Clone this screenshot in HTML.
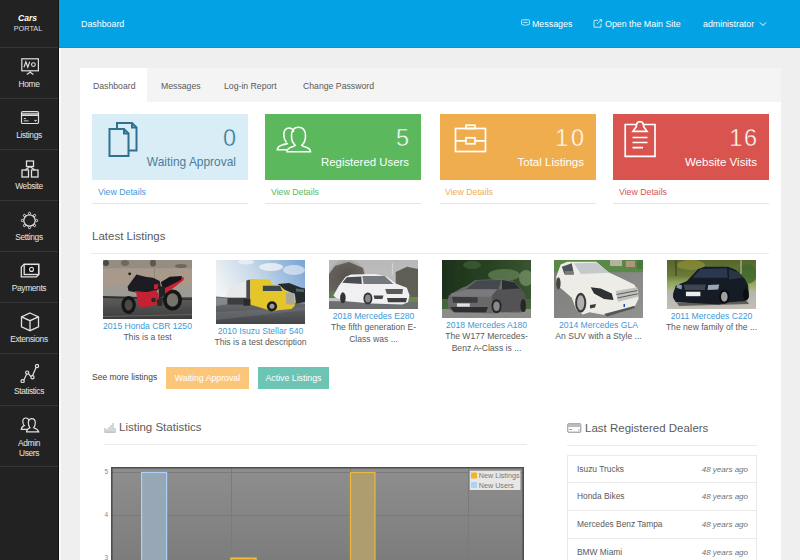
<!DOCTYPE html>
<html><head><meta charset="utf-8">
<style>
*{box-sizing:border-box;margin:0;padding:0}
html,body{width:800px;height:560px;overflow:hidden;background:#efefef;font-family:"Liberation Sans",sans-serif;}
.abs{position:absolute}
#side{position:absolute;left:0;top:0;width:59px;height:560px;background:#222222;border-right:1px solid #141414}
#edge{position:absolute;left:59px;top:48px;width:1.5px;height:512px;background:#fafafa}
#side .sep{position:absolute;left:0;width:58px;height:1px;background:#363636}
#side .lbl{position:absolute;left:0;width:58px;text-align:center;color:#e6e6e6;font-size:8.4px;letter-spacing:-0.35px;line-height:9.5px}
#side svg{position:absolute}
#hdr{position:absolute;left:59px;top:0;width:741px;height:48px;background:#03a2e4;border-bottom:1px solid #0994cf;color:#fff;font-size:8.85px}
#hdr span{position:absolute;top:18.7px;line-height:11px;white-space:nowrap}
#panel{position:absolute;left:80px;top:68px;width:701px;height:500px;background:#fff}
#tabs{position:absolute;left:0;top:0;width:701px;height:33.5px;background:#f4f4f4}
.tab{position:absolute;top:11.5px;font-size:8.7px;color:#5a5a5a;line-height:12px;white-space:nowrap}
.stat{position:absolute;top:46px;width:156px;height:66px}
.stat .num{position:absolute;right:12px;top:10.5px;font-size:23.5px;line-height:26px}
.stat .txt{position:absolute;right:12px;top:41px;font-size:11.8px;line-height:14px;white-space:nowrap}
.vd{position:absolute;top:118.5px;font-size:8.75px;line-height:11px}
.ul{position:absolute;top:135px;width:156px;height:1px;background:#e6e6e6}
h3{position:absolute;font-weight:normal;font-size:11.5px;color:#5c5c5c;line-height:14px;white-space:nowrap}
.hr{position:absolute;height:1px;background:#eaeaea}
.item{position:absolute;top:192px;width:113px;text-align:center}
.item .img{margin:0 auto;width:89px}
.item .t{color:#3a9ad9;font-size:8.6px;line-height:12px;margin-top:1px;white-space:nowrap}
.item .d{color:#5a5a5a;font-size:8.6px;line-height:11.7px}
.btn{position:absolute;top:299px;height:22px;color:#fff;font-size:8.75px;line-height:22px;text-align:center}
.dl{position:absolute;left:487px;width:190px;height:28px;border:1px solid #eaeaea;border-top:none}
.dl .n{position:absolute;left:9px;top:8px;font-size:8.4px;color:#5a5a5a;line-height:11px}
.dl .a{position:absolute;right:8px;top:8px;font-size:8px;color:#707070;font-style:italic;line-height:11px}
</style></head><body>
<div id="side">
  <div class="abs" style="left:0;top:13.5px;width:55px;text-align:center;color:#fff;font-weight:bold;font-style:italic;font-size:8.6px;line-height:9px">Cars</div>
  <div class="abs" style="left:0;top:24.3px;width:56px;text-align:center;color:#ddd;font-size:7.3px;line-height:9px">PORTAL</div>
  <div class="sep" style="top:47px"></div>
  <div class="lbl" style="top:79.5px">Home</div>
  <div class="sep" style="top:98px"></div>
  <div class="lbl" style="top:130.5px">Listings</div>
  <div class="sep" style="top:149px"></div>
  <div class="lbl" style="top:181.5px">Website</div>
  <div class="sep" style="top:200px"></div>
  <div class="lbl" style="top:232.5px">Settings</div>
  <div class="sep" style="top:251px"></div>
  <div class="lbl" style="top:283.5px">Payments</div>
  <div class="sep" style="top:302px"></div>
  <div class="lbl" style="top:334.5px">Extensions</div>
  <div class="sep" style="top:353px"></div>
  <div class="lbl" style="top:386.5px">Statistics</div>
  <div class="sep" style="top:405px"></div>
  <div class="lbl" style="top:438px;line-height:10px">Admin<br>Users</div>
  <div class="sep" style="top:466px"></div>

  <svg style="left:20px;top:57px" width="20" height="19" viewBox="0 0 20 19" fill="none" stroke="#e0e0e0" stroke-width="1.2">
    <rect x="1.8" y="1.8" width="16.6" height="12"/>
    <polyline points="4,10.3 5.9,4.8 7.8,10.3 9.7,4.8" stroke-width="1.1"/>
    <circle cx="13.4" cy="7.6" r="1.9" stroke-width="1.1"/>
    <path d="M10.1 13.8 V15.3 M6.8 17.4 L10.1 15.3 L13.4 17.4"/>
  </svg>
  <svg style="left:20px;top:110px" width="20" height="15" viewBox="0 0 20 15" fill="none" stroke="#e0e0e0" stroke-width="1.2">
    <rect x="1.5" y="1.7" width="17" height="11.8" rx="1.3"/>
    <path d="M1.5 3.9 H18.5 M1.5 5.4 H18.5" stroke-width="1.1"/>
    <path d="M3.8 8.6 H6 M3.8 10.9 H8.5" stroke-width="0.9"/>
    <path d="M14.3 10.3 L16.8 10.3 L15.6 11.6 Z" fill="#e0e0e0" stroke-width="0.5"/>
  </svg>
  <svg style="left:21px;top:160px" width="18" height="18" viewBox="0 0 18 18" fill="none" stroke="#e0e0e0" stroke-width="1.3">
    <rect x="5.5" y="1" width="7" height="5.5"/>
    <rect x="1" y="10" width="6.5" height="7"/>
    <rect x="10.5" y="10" width="6.5" height="7"/>
    <path d="M9 6.5 L4.2 10 M9 6.5 L13.8 10"/>
  </svg>
  <svg style="left:20px;top:211px" width="19" height="19" viewBox="0 0 19 19" fill="none" stroke="#e0e0e0" stroke-width="1.2">
    <circle cx="9.5" cy="9.5" r="5.7"/>
    <g fill="#222" stroke-width="1"><circle cx="16.60" cy="9.50" r="1.1"/><circle cx="14.52" cy="14.52" r="1.1"/><circle cx="9.50" cy="16.60" r="1.1"/><circle cx="4.48" cy="14.52" r="1.1"/><circle cx="2.40" cy="9.50" r="1.1"/><circle cx="4.48" cy="4.48" r="1.1"/><circle cx="9.50" cy="2.40" r="1.1"/><circle cx="14.52" cy="4.48" r="1.1"/></g>
  </svg>
  <svg style="left:20px;top:263px" width="20" height="15" viewBox="0 0 20 15" fill="none" stroke="#e0e0e0" stroke-width="1.3">
    <path d="M4 1.3 H18.7 V11.5 L16.5 13.8 H1.3 V4 Z"/>
    <rect x="4.2" y="1.3" width="14.5" height="10.2"/>
    <rect x="6.5" y="3.3" width="10" height="6.2" fill="#111" stroke="none"/>
    <circle cx="11.5" cy="6.4" r="2" stroke-width="1.1"/>
  </svg>
  <svg style="left:20px;top:312px" width="20" height="20" viewBox="0 0 20 20" fill="none" stroke="#e0e0e0" stroke-width="1.3">
    <path d="M10 1 L18.5 4.8 V14.8 L10 18.7 L1.5 14.8 V4.8 Z"/>
    <path d="M1.5 4.8 L10 8.7 L18.5 4.8 M10 8.7 V18.7"/>
  </svg>
  <svg style="left:20px;top:364px" width="20" height="19" viewBox="0 0 20 19" fill="none" stroke="#e0e0e0" stroke-width="1.2">
    <path d="M3.4 17 L7.4 8.6 L11.8 13.3 L16.5 2.5"/>
    <g fill="#222"><circle cx="2.6" cy="17.2" r="1.6"/><circle cx="7.2" cy="8.6" r="1.6"/><circle cx="12.5" cy="13.3" r="1.6"/><circle cx="17" cy="2" r="1.6"/></g>
  </svg>
  <svg style="left:20px;top:417px" width="20" height="16" viewBox="0 0 20 16" fill="none" stroke="#e0e0e0" stroke-width="1.2">
    <path d="M7 12.3 H1.3 C1.3 10 2.5 9.3 4.3 8.6 C3 7.3 2.8 5.8 2.8 4.2 C2.8 2.2 4 1 5.8 1 C7.6 1 8.8 2.2 8.8 4.2"/>
    <path d="M6.6 14.8 C6.6 12.3 8 11.5 10 10.8 C8.6 9.4 8.3 7.7 8.3 5.8 C8.3 3.3 9.6 1.7 11.8 1.7 C14 1.7 15.3 3.3 15.3 5.8 C15.3 7.7 15 9.4 13.6 10.8 C15.6 11.5 17.8 12.3 18.7 14.8 Z"/>
  </svg>
</div>
<div id="edge"></div>
<div id="hdr">
  <span style="left:22px">Dashboard</span>
  <span style="left:473px">Messages</span>
  <span style="left:546px">Open the Main Site</span>
  <span style="left:644px">administrator</span>

  <svg class="abs" style="left:462px;top:19px" width="9" height="8" viewBox="0 0 9 8" fill="none" stroke="#d8f0fc" stroke-width="0.9">
    <path d="M1.2 0.8 H7.8 Q8.4 0.8 8.4 1.4 V5.2 Q8.4 5.8 7.8 5.8 H5.6 L4.5 7 L3.4 5.8 H1.2 Q0.6 5.8 0.6 5.2 V1.4 Q0.6 0.8 1.2 0.8 Z"/>
    <path d="M2.3 3.4 H6.5"/>
  </svg>
  <svg class="abs" style="left:534px;top:18.5px" width="10" height="9" viewBox="0 0 10 9" fill="none" stroke="#d8f0fc" stroke-width="0.9">
    <path d="M5 1.3 H1 V8.2 H8 V4.5"/>
    <path d="M4 5 L8.5 0.7 M6.2 0.7 H8.6 V3"/>
  </svg>
  <svg class="abs" style="left:700px;top:21px" width="8" height="6" viewBox="0 0 8 6" fill="none" stroke="#fff" stroke-width="1">
    <path d="M1 1.5 L4 4.5 L7 1.5"/>
  </svg>
</div>
<div id="panel">
  <div id="tabs">
    <div class="abs" style="left:0;top:0;width:67px;height:33.5px;background:#fff"></div>
    <div class="tab" style="left:13px">Dashboard</div>
    <div class="tab" style="left:81px">Messages</div>
    <div class="tab" style="left:144px">Log-in Report</div>
    <div class="tab" style="left:223px">Change Password</div>
  </div>
  <!-- stat boxes -->
  <div class="stat" style="left:12px;background:#d9edf7;color:#31708f"><div class="num" style="-webkit-text-stroke:0.45px #d9edf7">0</div><div class="txt" style="color:#4d7d9a;font-size:11.95px">Waiting Approval</div></div>
  <div class="stat" style="left:185px;background:#5cb85c;color:#fff"><div class="num" style="-webkit-text-stroke:0.45px #5cb85c">5</div><div class="txt" style="font-size:11.4px">Registered Users</div></div>
  <div class="stat" style="left:360px;background:#f0ad4e;color:#fff"><div class="num" style="-webkit-text-stroke:0.45px #f0ad4e;letter-spacing:2.5px;margin-right:-2.5px">10</div><div class="txt" style="font-size:11.5px">Total Listings</div></div>
  <div class="stat" style="left:533px;background:#d9534f;color:#fff"><div class="num" style="-webkit-text-stroke:0.45px #d9534f;letter-spacing:1.5px;margin-right:-1.5px">16</div><div class="txt" style="font-size:11.55px">Website Visits</div></div>

  <svg class="abs" style="left:28px;top:53px" width="30" height="36" viewBox="0 0 30 36" fill="none" stroke="#31708f" stroke-width="2" stroke-linejoin="miter">
    <path d="M9 7.5 V2 H24 L28.5 6.5 V29.5 H21"/>
    <path d="M24 2 V6.5 H28.5"/>
    <path d="M1.5 8 H16 L20.5 12.5 V35 H1.5 Z"/>
    <path d="M16 8 V12.5 H20.5"/>
  </svg>
  <svg class="abs" style="left:196px;top:57px" width="36" height="28" viewBox="0 0 36 28" fill="none" stroke="#fff" stroke-width="1.6">
    <path d="M12 18.5 C10.5 19 8.5 19.3 7 19.8 C3.5 20.8 1.3 21.8 1.3 24.8 H11"/>
    <path d="M10.5 17.5 C9 15.8 7.8 13.5 7.8 10 C7.8 5.5 9.8 3 13 3 C15.5 3 17.2 4.5 17.8 7"/>
    <path d="M11 26.8 C11 23.5 13.5 22.5 16.5 21.7 C18 21.3 19 21 19.3 20.3 C16.8 18.3 15.5 15.5 15.5 11 C15.5 5.5 18 2.2 22.5 2.2 C27 2.2 29.5 5.5 29.5 11 C29.5 15.5 28.2 18.3 25.7 20.3 C26 21 27 21.3 28.5 21.7 C31.5 22.5 34.5 23.5 34.5 26.8 Z"/>
  </svg>
  <svg class="abs" style="left:374px;top:56px" width="33" height="29" viewBox="0 0 33 29" fill="none" stroke="#fff" stroke-width="1.7">
    <rect x="1.5" y="4.5" width="30" height="23"/>
    <rect x="12" y="1.2" width="9" height="3.3"/>
    <path d="M1.5 16.8 H12 M21 16.8 H31.5"/>
    <rect x="12" y="13.8" width="9" height="6"/>
  </svg>
  <svg class="abs" style="left:544px;top:52px" width="32" height="38" viewBox="0 0 32 38" fill="none" stroke="#fff" stroke-width="1.7">
    <path d="M13 4.5 H1.2 V36.3 H31 V4.5 H19"/>
    <path d="M9 11.3 L12.3 6.8 C12.3 3.4 14 1.6 16 1.6 C18 1.6 19.7 3.4 19.7 6.8 L23 11.3 Z"/>
    <path d="M8.5 17.5 H23.5 M8.5 22.5 H23.5 M8.5 27.6 H19" stroke-width="1.6"/>
  </svg>
  <div class="vd" style="left:18px;color:#3a9ad9">View Details</div>
  <div class="vd" style="left:191px;color:#5cb85c">View Details</div>
  <div class="vd" style="left:365px;color:#f0ad4e">View Details</div>
  <div class="vd" style="left:539px;color:#d9534f">View Details</div>
  <div class="ul" style="left:12px"></div>
  <div class="ul" style="left:185px"></div>
  <div class="ul" style="left:360px"></div>
  <div class="ul" style="left:533px"></div>

  <h3 style="left:12px;top:161px">Latest Listings</h3>
  <div class="hr" style="left:11px;top:185px;width:678px"></div>

  <div class="item" style="left:11px"><div class="img" style="height:59px"><svg width="89" height="59" viewBox="0 0 89 59"><defs><filter id="bl1" x="-5%" y="-5%" width="110%" height="110%"><feGaussianBlur stdDeviation="0.5"/></filter><linearGradient id="g1" x1="0" y1="0" x2="0" y2="1"><stop offset="0" stop-color="#5e5d5b"/><stop offset="1" stop-color="#3c3c3c"/></linearGradient></defs><g filter="url(#bl1)"><rect width="89" height="59" fill="#a09c96"/><rect width="89" height="8.5" fill="#958d82"/><ellipse cx="3" cy="3" rx="3" ry="3" fill="#4a4a48"/><ellipse cx="22" cy="3" rx="4" ry="3" fill="#6e675e"/><ellipse cx="50" cy="3" rx="3" ry="3.5" fill="#5e574f"/><ellipse cx="78" cy="6" rx="6" ry="2" fill="#6e665c"/><rect y="8.5" width="89" height="16.5" fill="#a8998b"/><path d="M51.5 8.5 V25" stroke="#8d8175" stroke-width="0.8"/><rect y="25" width="89" height="12" fill="#9e9a94"/><rect y="37" width="89" height="22" fill="url(#g1)"/><path d="M0 36 L89 38.5 L89 40 L0 38Z" fill="#2e2e2e"/><path d="M0 56 L89 54 L89 55 L0 57Z" fill="#7a7a78" opacity=".6"/><ellipse cx="25.6" cy="45" rx="7.2" ry="8.9" fill="#141414"/><ellipse cx="25.6" cy="45" rx="4" ry="5.5" fill="#4c4a46"/><ellipse cx="69.5" cy="40" rx="9.5" ry="10.6" fill="#141414"/><ellipse cx="69.5" cy="40" rx="5.8" ry="6.8" fill="#77726a"/><path d="M60 30 L66.7 22.2 L77.9 16.7 L81.2 17.8 L80.1 20.6 L69 28.9 L62.3 33.4Z" fill="#c8232d"/><path d="M57.8 22.2 L66.7 16.7 L79 16.1 L77.9 20 L69 24.5 L60 28.9Z" fill="#18181a"/><path d="M55.6 26 L62 27 L62 36 L56 38Z" fill="#222"/><path d="M24.5 26.7 L33.4 14.5 L42.3 16.7 L50 17.8 L56.7 21.1 L57.8 26.7 L53.4 31.1 L44.5 32.3 L32.3 32.3 L25.6 31.1Z" fill="#1e1e20"/><path d="M31.1 31.1 L44.5 32.3 L52.3 30 L55.6 33.4 L55.6 42.3 L52.3 45.6 L44.5 46.7 L36.7 47.8 L34.5 42.3 L33.4 33.4Z" fill="#c42430"/><path d="M51 24.5 L55.6 24 L54.5 29 L51 29Z" fill="#c42430"/><circle cx="50.5" cy="40" r="2.3" fill="#2a2a2a"/><path d="M53.5 40 L60 38 L59 46 L54.5 46Z" fill="#2c2c2c"/><circle cx="26.7" cy="13.8" r="1.4" fill="#1a1a1a"/></g></svg></div><div class="t">2015 Honda CBR 1250</div><div class="d">This is a test</div></div>
  <div class="item" style="left:124px"><div class="img" style="height:64px"><svg width="89" height="64" viewBox="0 0 89 64"><defs><filter id="bl2" x="-5%" y="-5%" width="110%" height="110%"><feGaussianBlur stdDeviation="0.5"/></filter><linearGradient id="g2" x1="0" y1="0.4" x2="1" y2="0"><stop offset="0" stop-color="#f2f5f6"/><stop offset=".45" stop-color="#c6d8e8"/><stop offset="1" stop-color="#77a3d4"/></linearGradient><linearGradient id="g2b" x1="0" y1="0" x2="0" y2="1"><stop offset="0" stop-color="#727476"/><stop offset="1" stop-color="#434549"/></linearGradient></defs><g filter="url(#bl2)"><rect width="89" height="64" fill="url(#g2)"/><ellipse cx="55" cy="7" rx="12" ry="4" fill="#f0f4f7" opacity=".8"/><ellipse cx="78" cy="10" rx="11" ry="5" fill="#e8eef4" opacity=".65"/><ellipse cx="30" cy="2" rx="8" ry="2.5" fill="#f0f4f7" opacity=".7"/><path d="M0 36.6 L89 43.4 L89 64 L0 64Z" fill="url(#g2b)"/><path d="M0 38 L40 40 L0 46Z" fill="#9a9c9e" opacity=".6"/><path d="M0 52 L89 47 L89 50 L0 60Z" fill="#7b7d80" opacity=".4"/><path d="M11.4 29.7 L30.3 20.6 L34.3 19.4 L34.3 37.7 L11.4 37.7Z" fill="#e6e8ea"/><path d="M11.4 37.7 H34.3 V44.6 H11.4Z" fill="#3e3e40"/><path d="M30.3 20.6 L34.3 19.4 L34.3 38.9 L30.3 38.9Z" fill="#4a4c4e"/><path d="M61.7 24 L73.1 22.9 L84.6 27.4 L89 28.6 L89 42.3 L80 43.4 L78.9 34.3 L68.6 29.7Z" fill="#26292d"/><path d="M80 28.6 L88 29.5 L88 32 L80 31.5Z" fill="#5a8a8a" opacity=".7"/><path d="M34.3 18.9 L53.7 19.4 L56 24 L64 25.7 L70.9 32.6 L77.7 33.1 L78.9 45.7 L75.4 49.1 L61.7 50.3 L57.1 51.4 L34.3 44.6Z" fill="#e5c62b"/><path d="M46.9 25.7 L64 25.7 L66.3 30.9 L46.9 30.9Z" fill="#3a4550"/><path d="M69.7 33.1 L78.3 33.1 L78.3 44.6 L70.3 44.6Z" fill="#aaa898"/><path d="M27.4 38.9 H34.3 V45.7 H27.4Z" fill="#2a2a2a"/><circle cx="56" cy="46.3" r="5.1" fill="#1c1c1c"/><circle cx="56" cy="46.3" r="2.5" fill="#9a9a9a"/></g></svg></div><div class="t">2010 Isuzu Stellar 540</div><div class="d">This is a test description</div></div>
  <div class="item" style="left:237px"><div class="img" style="height:49px"><svg width="89" height="49" viewBox="0 0 89 49"><defs><filter id="bl3" x="-5%" y="-5%" width="110%" height="110%"><feGaussianBlur stdDeviation="0.5"/></filter><linearGradient id="g3" x1="0" y1="0" x2="0" y2="1"><stop offset="0" stop-color="#b8b8b8"/><stop offset="1" stop-color="#c4c4c4"/></linearGradient><radialGradient id="t3" cx=".5" cy=".5" r=".5"><stop offset="0" stop-color="#4e4a42"/><stop offset="1" stop-color="#4e4a42" stop-opacity="0"/></radialGradient></defs><g filter="url(#bl3)"><rect width="89" height="49" fill="url(#g3)"/><ellipse cx="18" cy="18" rx="20" ry="20" fill="url(#t3)"/><path d="M0 14 L6 6 L20 2 L34 8 L36.7 20 L20 36 L0 37Z" fill="#58544c" opacity=".85"/><path d="M66.7 12 L78 6.7 L89 9 L89 37.8 L66.7 37.8Z" fill="#57534a" opacity=".9"/><path d="M63.4 3.3 V15" stroke="#d8d8d8" stroke-width="0.9"/><rect x="78" y="37.5" width="11" height="4" fill="#6a8a4a"/><rect x="0" y="31" width="8" height="7" fill="#5f7f4a"/><rect y="41.2" width="89" height="7.8" fill="#6d6e70"/><path d="M4.4 35.6 L10 25.6 L16.7 16.7 L22.2 14.5 L46.7 13.9 L57.8 16.7 L66.7 23.4 L77.9 27.8 L80.6 35.6 L79 42.3 L73.4 44.5 L42.3 43.4 L17.8 41.2 L6.7 37.8Z" fill="#f0f0f2"/><path d="M13.3 22.8 L17.8 17.2 L32.3 16.5 L32.8 23.9Z" fill="#4a4e52"/><path d="M33.4 16.1 L55.6 16.1 L64.5 23.9 L34.5 23.9Z" fill="#74787c"/><path d="M56.2 28.9 L74 28.9 L73.4 33.9 L57.8 33.9Z" fill="#5a5a5a"/><path d="M44.5 35.6 L54.5 35.6 L53.4 38.9 L45.6 38.9Z" fill="#444"/><path d="M58 38 L78 38 L77 42.3 L59 42.3Z" fill="#404040"/><ellipse cx="38.9" cy="38.4" rx="4.5" ry="6" fill="#333"/><ellipse cx="38.9" cy="38.4" rx="2.8" ry="4" fill="#8a8a8a"/><ellipse cx="13.9" cy="37.8" rx="2.8" ry="5.5" fill="#333"/></g></svg></div><div class="t">2018 Mercedes E280</div><div class="d">The fifth generation E-<br>Class was ...</div></div>
  <div class="item" style="left:350px"><div class="img" style="height:58px"><svg width="89" height="58" viewBox="0 0 89 58"><defs><filter id="bl4" x="-5%" y="-5%" width="110%" height="110%"><feGaussianBlur stdDeviation="0.5"/></filter><linearGradient id="g4" x1="0" y1="0" x2="1" y2="0"><stop offset="0" stop-color="#1c321b"/><stop offset=".6" stop-color="#2a4424"/><stop offset="1" stop-color="#3a5431"/></linearGradient></defs><g filter="url(#bl4)"><rect width="89" height="58" fill="url(#g4)"/><ellipse cx="62" cy="15" rx="16" ry="6" fill="#66845a" opacity=".7"/><ellipse cx="84" cy="18" rx="7" ry="8" fill="#86a274" opacity=".6"/><ellipse cx="30" cy="5" rx="9" ry="4" fill="#41603a" opacity=".7"/><rect y="39" width="89" height="11" fill="#45663a"/><rect y="49" width="89" height="9" fill="#8c8c88"/><path d="M6.7 35.6 L10 33.4 L20 27.8 L25.6 25.6 L33.4 20 L60 18.9 L71.2 21.1 L77.9 27.8 L82.3 33.4 L84.5 42.3 L83.4 51.2 L77.9 52.8 L59 52.3 L52.3 53.4 L12.2 52.3 L6.7 48.9 L5.6 42.3Z" fill="#69696b"/><path d="M50 30 L77.9 27.8 L82.3 33.4 L84.5 42.3 L83.4 51.2 L59 52.3 L50 45Z" fill="#525256"/><path d="M9 33.4 L25.6 29.5 L55 29.5 L49 36.7 L9 36.7Z" fill="#7a7a7d"/><path d="M24.5 28.9 L34.5 20.6 L59 20 L56.7 28.9Z" fill="#45484d"/><path d="M60 20 L72.3 22.2 L77.9 28.4 L60 29.5Z" fill="#2c2e32"/><path d="M10 36.7 L35.6 37.3 L35.6 42.8 L11.1 42.8Z" fill="#3a3a3c"/><rect x="15" y="43.4" width="12.8" height="3.3" fill="#e0e0e0"/><path d="M8 47 L46 47 L44 52.3 L12 52.3Z" fill="#2e2e30"/><ellipse cx="54.5" cy="46.2" rx="5" ry="7" fill="#262626"/><ellipse cx="54.5" cy="46.2" rx="3.2" ry="4.8" fill="#8a8a8a"/><ellipse cx="81.2" cy="45.6" rx="2.8" ry="6.5" fill="#262626"/></g></svg></div><div class="t">2018 Mercedes A180</div><div class="d">The W177 Mercedes-<br>Benz A-Class is ...</div></div>
  <div class="item" style="left:462px"><div class="img" style="height:58px"><svg width="89" height="58" viewBox="0 0 89 58"><defs><filter id="bl5" x="-5%" y="-5%" width="110%" height="110%"><feGaussianBlur stdDeviation="0.5"/></filter><linearGradient id="g5" x1="0" y1="0" x2="1" y2="1"><stop offset="0" stop-color="#7a7a78"/><stop offset="1" stop-color="#929290"/></linearGradient></defs><g filter="url(#bl5)"><rect width="89" height="58" fill="url(#g5)"/><rect width="89" height="12.2" fill="#5a8847"/><rect x="56" y="0" width="12" height="6" fill="#c8c0b0" opacity=".8"/><rect x="72" y="1" width="9" height="6" fill="#c89a8a" opacity=".8"/><rect x="83" y="0" width="6" height="9" fill="#4a7a3a"/><path d="M2.2 16.7 L6.7 4.4 L13.3 1.7 L42.3 1.7 L54.5 12.2 L69 18.9 L80.1 24.5 L84 30 L84.5 38.9 L81.2 45.6 L66.7 52.3 L53.4 55.6 L35.6 52.3 L28.9 54.5 L22.2 50 L17.8 37.8 L8.9 30 L3.3 25.6Z" fill="#eeece6"/><path d="M20 3.3 L42.3 2.8 L55.6 12.8 L26.7 13.9Z" fill="#c4cacc"/><path d="M7.8 6.7 L17.8 3.3 L20 14.5 L10.6 14.5Z" fill="#4a5258"/><path d="M11 11 L19 11 L19 14.5 L11 14.5Z" fill="#7a7a7a"/><path d="M36.7 27.3 L46.7 28.4 L57.8 33.4 L59.5 40 L50 38.9 L40 33.4Z" fill="#2e3035"/><path d="M61.7 31.1 L83.4 27.3 L84 36.7 L64 41.7Z" fill="#c0c0bc"/><path d="M62.5 34.5 L83.5 30.5 M63.2 38 L83.8 33.8" stroke="#505050" stroke-width="0.9"/><path d="M36 45 L42 44 L41 47.5 L36 48.5Z" fill="#3a3a3a"/><path d="M50 54 L80 46 L81 48 L53 56.5Z" fill="#555"/><ellipse cx="26.7" cy="42.8" rx="5.6" ry="10" fill="#3a3a3a"/><ellipse cx="26.7" cy="42.8" rx="3.6" ry="7.5" fill="#b0b0b0"/><ellipse cx="4.4" cy="23.4" rx="2.2" ry="6.1" fill="#444"/><rect x="69.5" y="44" width="1.5" height="3" fill="#2a4aa0"/></g></svg></div><div class="t">2014 Mercedes GLA</div><div class="d">An SUV with a Style ...</div></div>
  <div class="item" style="left:575px"><div class="img" style="height:49px"><svg width="89" height="49" viewBox="0 0 89 49"><defs><filter id="bl6" x="-5%" y="-5%" width="110%" height="110%"><feGaussianBlur stdDeviation="0.5"/></filter><linearGradient id="g6" x1="0" y1="0" x2="0" y2="1"><stop offset="0" stop-color="#56652c"/><stop offset=".32" stop-color="#6a7a38"/><stop offset=".45" stop-color="#8ea258"/><stop offset=".58" stop-color="#a8b07c"/><stop offset=".64" stop-color="#b6b4aa"/><stop offset="1" stop-color="#c2c0b6"/></linearGradient></defs><g filter="url(#bl6)"><rect width="89" height="49" fill="url(#g6)"/><ellipse cx="24" cy="5" rx="14" ry="5" fill="#a09a3a" opacity=".55"/><ellipse cx="80" cy="14" rx="10" ry="10" fill="#3e6a2e" opacity=".8"/><rect x="8" y="0" width="1.8" height="16" fill="#3a3e26" opacity=".6"/><rect x="73" y="0" width="2" height="14" fill="#c8c8a8" opacity=".5"/><path d="M6.1 33.4 L8.9 25.6 L20 21.1 L31.1 8.9 L37.8 6.7 L61.2 6.7 L69 10 L77.9 18.9 L81.2 25.6 L81.8 37.8 L77.9 41.2 L62.3 42.3 L52.3 44.5 L20 42.8 L8.9 42.3 L6.1 37.8Z" fill="#131a28"/><path d="M25.6 17.8 L33.4 8.9 L60 8.3 L60.6 17.8Z" fill="#2b3850"/><path d="M61.7 8.9 L71.2 12.2 L75.6 17.8 L62.3 19.5Z" fill="#2a3445"/><path d="M41.2 25 L52.3 24.5 L51.2 29.5 L40.6 30Z" fill="#9aa5b5"/><path d="M10 23.4 L15 25.6 L14.5 29.5 L9.5 27.8Z" fill="#8a95a5"/><path d="M16.7 24.5 L38.9 24.5 L37.8 30 L17.8 30Z" fill="#3e4450"/><rect x="18.9" y="31.7" width="14.5" height="4.5" fill="#ececec"/><path d="M10 43 L80 41 L82 44 L12 46Z" fill="#202020" opacity=".6"/><ellipse cx="57.3" cy="36.7" rx="5" ry="7" fill="#0c0c0c"/><ellipse cx="57.3" cy="36.7" rx="3.3" ry="5" fill="#a0a0a0"/><ellipse cx="79" cy="34.5" rx="2.8" ry="6" fill="#0c0c0c"/></g></svg></div><div class="t">2011 Mercedes C220</div><div class="d">The new family of the ...</div></div>

  <div class="abs" style="left:12px;top:304px;font-size:8.5px;color:#444;line-height:11px">See more listings</div>
  <div class="btn" style="left:86px;width:83px;background:#fcc67a">Waiting Approval</div>
  <div class="btn" style="left:178px;width:71px;background:#6bc4b4">Active Listings</div>

  <h3 style="left:39px;top:352px">Listing Statistics</h3>
  <div class="hr" style="left:24px;top:376px;width:423px"></div>


  <svg class="abs" style="left:24px;top:354px" width="12" height="11" viewBox="0 0 12 11" fill="none" stroke="#9aa6ae" stroke-width="0.9">
    <path d="M1 10 V6 M3 10 V7 M5 10 V5 M7 10 V3 M9 10 V1 M11 10 V6"/>
    <path d="M0.5 10.3 H11.5" stroke="#aaa"/>
  </svg>
  <svg class="abs" style="left:487px;top:355px" width="15" height="10" viewBox="0 0 15 10" fill="none" stroke="#8a8a8a" stroke-width="1">
    <rect x="0.8" y="0.8" width="13" height="8.4" rx="0.5"/>
    <rect x="0.8" y="1" width="13" height="3" fill="#bbb" stroke="none"/>
    <path d="M2.5 6.5 H5 M11 7 H12.5" stroke-width="0.9"/>
  </svg>
  <div class="abs" style="left:18px;top:400px;width:10px;text-align:right;font-size:6.5px;color:#888;line-height:8px">5</div>
  <div class="abs" style="left:18px;top:443px;width:10px;text-align:right;font-size:6.5px;color:#888;line-height:8px">4</div>
  <div class="abs" style="left:18px;top:486px;width:10px;text-align:right;font-size:6.5px;color:#888;line-height:8px">3</div>
  <svg class="abs" style="left:31px;top:399px" width="414" height="100" viewBox="0 0 414 100">
    <defs><linearGradient id="cg" x1="0" y1="0" x2="0" y2="1"><stop offset="0" stop-color="#8e8e8e"/><stop offset="1" stop-color="#7b7b7b"/></linearGradient></defs>
    <rect x="0" y="0" width="413" height="100" fill="url(#cg)"/>
    <g stroke="#7a7a7a" stroke-width="1">
      <path d="M1 5.5 H412 M1 48.5 H412 M1 91.5 H412"/>
      <path d="M120.5 0 V100 M239.5 0 V100 M357.5 0 V100"/>
    </g>
    <rect x="30.6" y="5.5" width="25" height="100" fill="#97a7b5" stroke="#a9d2f6" stroke-width="1.2"/>
    <rect x="239.5" y="5.5" width="24.5" height="100" fill="#ae9e6f" stroke="#e9b83c" stroke-width="1.2"/>
    <rect x="120" y="91.2" width="25" height="10" fill="#ae9e6f" stroke="#ecb93a" stroke-width="1.6"/>
    <path d="M0.8 100 V0.8 H412.2 V100" fill="none" stroke="#4e4e4e" stroke-width="1.6"/>
    <rect x="358.8" y="3.8" width="50.6" height="19.2" fill="#ececec" opacity="0.95"/>
    <rect x="360" y="5.5" width="6" height="6" fill="#f0b429"/>
    <rect x="360" y="15" width="6" height="6" fill="#a8d4f8"/>
    <text x="367.8" y="11" font-family="Liberation Sans" font-size="7.2" fill="#777">New Listings</text>
    <text x="367.8" y="20.5" font-family="Liberation Sans" font-size="7.2" fill="#777">New Users</text>
  </svg>
  <h3 style="left:505px;top:352.8px">Last Registered Dealers</h3>
  <div class="hr" style="left:487px;top:377px;width:190px"></div>
  <div class="dl" style="top:387px;border-top:1px solid #eaeaea"><span class="n">Isuzu Trucks</span><span class="a">48 years ago</span></div>
  <div class="dl" style="top:415px"><span class="n">Honda Bikes</span><span class="a">48 years ago</span></div>
  <div class="dl" style="top:443px"><span class="n">Mercedes Benz Tampa</span><span class="a">48 years ago</span></div>
  <div class="dl" style="top:471px"><span class="n">BMW Miami</span><span class="a">48 years ago</span></div>
</div>
</body></html>
